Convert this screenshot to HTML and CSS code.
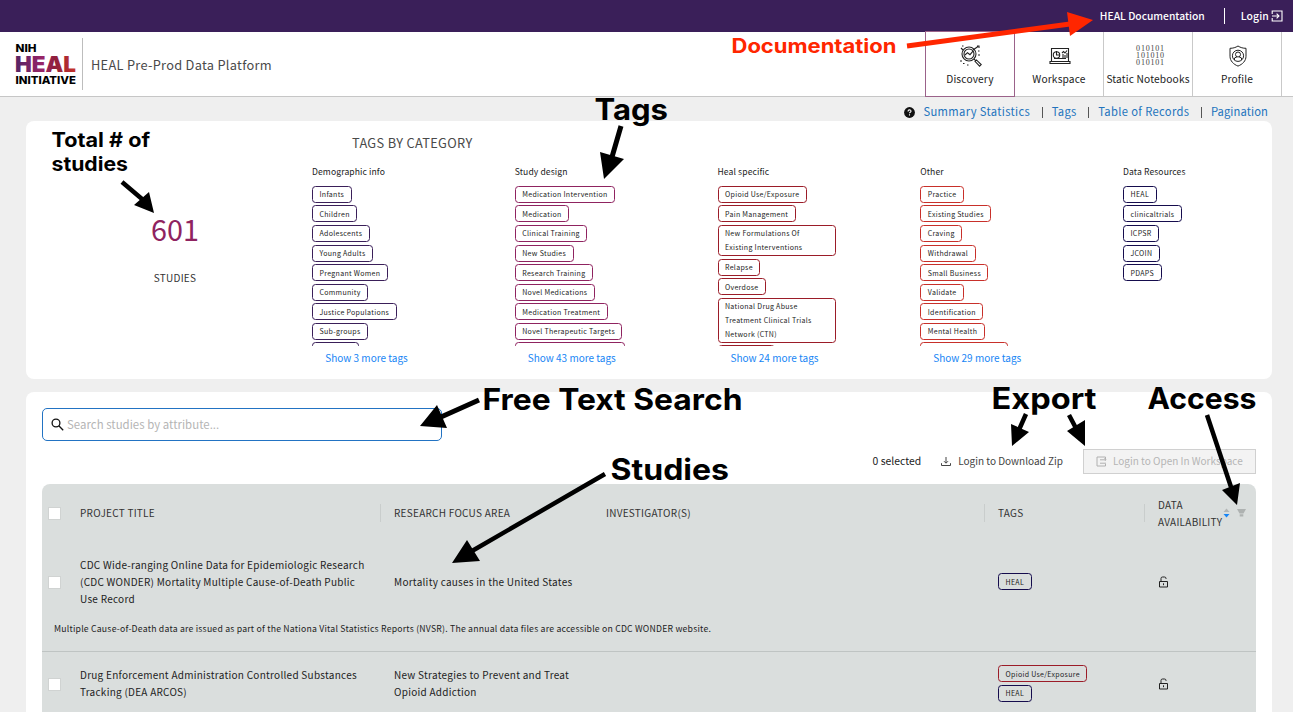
FILE: index.html
```html
<!DOCTYPE html>
<html lang="en">
<head>
<meta charset="utf-8">
<title>HEAL Pre-Prod Data Platform</title>
<link rel="stylesheet" href="styles.css">
</head>
<body>
<div class="page">
  <div class="topbar">
    <a class="topbar-doc">HEAL Documentation</a>
    <span class="topbar-sep"></span>
    <a class="topbar-login">Login
      <svg width="12" height="12" viewBox="0 0 12 12" fill="none" stroke="#fff" stroke-width="1.1"><path d="M1.2 4V1h9.8v10H1.2V8M1 6h6.8M5.6 3.6 8 6 5.6 8.4"/></svg>
    </a>
  </div>
  <header class="nav">
    <svg class="logo" width="62" height="42" viewBox="0 0 62 42">
      <defs><linearGradient id="heal" x1="0" x2="1"><stop offset="0" stop-color="#532565"/><stop offset=".45" stop-color="#982568"/><stop offset=".65" stop-color="#8f1f3c"/><stop offset="1" stop-color="#c7342b"/></linearGradient></defs>
      <text x="0.500" y="8.600" font-size="10.600" textLength="21" lengthAdjust="spacingAndGlyphs">NIH</text>
      <text class="logo-heal" x="0" y="28.500" font-size="21.500" textLength="61" lengthAdjust="spacingAndGlyphs" fill="url(#heal)">HEAL</text>
      <text x="0.500" y="40.700" font-size="10.600" textLength="60.500" lengthAdjust="spacingAndGlyphs">INITIATIVE</text>
    </svg>
    <div class="nav-title">HEAL Pre-Prod Data Platform</div>
    <nav class="nav-items">
      <a class="nav-item active">
        <svg width="24" height="24" viewBox="0 0 24 24" fill="none" stroke="#222" stroke-width="1.1"><circle cx="10" cy="10" r="7"/><circle cx="10" cy="10" r="5"/><path d="M15 15l1.6 1.6M16 17.3l1.4-1.4 4.8 4.7-1.6 1.6zM6 11l2.5-2.3 2.5 2 3-3.5M14 6l5-3.5M18 2h2v2M2 4l2 2M1 17h2M4 19.5h1.5M8 21h1.5M19 7h1.5M19 11h2M3 2h1.5"/></svg>
        <span>Discovery</span></a>
      <a class="nav-item">
        <svg width="24" height="24" viewBox="0 0 24 24" fill="none" stroke="#222" stroke-width="1.1"><path d="M3.500 17V4.500h17V17M2 17.500h20v2H2z"/><circle cx="8.500" cy="11" r="3.200"/><path d="M8.500 7v4h3.500M14 9l1.500-1.500L17 9l2-2.500M15 10v4M17 11v3M19 9v5M6 14.500h12"/></svg>
        <span>Workspace</span></a>
      <a class="nav-item">
        <span class="digits">010101<br>101010<br>010101</span>
        <span>Static Notebooks</span></a>
      <a class="nav-item">
        <svg width="24" height="24" viewBox="0 0 24 24" fill="none" stroke="#222" stroke-width="1"><path d="M12 2c2.500 1.600 5 2.300 8 2.300v8c0 4.600-3.500 8-8 9.800-4.500-1.800-8-5.200-8-9.800v-8c3 0 5.500-.7 8-2.300z"/><circle cx="12" cy="11.800" r="5.600"/><circle cx="12" cy="10.500" r="2.500"/><path d="M8.500 16v-2l2.500-1.200M15.500 16v-2L13 12.800"/></svg>
        <span>Profile</span></a>
    </nav>
  </header>

  <main class="main">
    <div class="tour">
      <svg width="11" height="11" viewBox="0 0 11 11"><circle cx="5.500" cy="5.500" r="5.400" fill="#111"/><path d="M4 4.400c0-2 3-2 3-.2 0 1.100-1.500 1-1.500 2.100M5.500 7.300v1.200" fill="none" stroke="#fff" stroke-width="1.100"/></svg>
      <a>Summary Statistics</a><i></i><a>Tags</a><i></i><a>Table of Records</a><i></i><a>Pagination</a>
    </div>

    <section class="panel summary">
      <div class="stat"><div class="stat-num">601</div><div class="stat-label">STUDIES</div></div>
      <div class="cats">
        <h2>TAGS BY CATEGORY</h2>
        <div class="cat-grid">
          <div class="cat demo"><h3>Demographic info</h3>
            <div class="tags"><b>Infants</b><b>Children</b><b>Adolescents</b><b>Young Adults</b><b>Pregnant Women</b><b>Community</b><b>Justice Populations</b><b>Sub-groups</b><b class="cut"></b></div>
            <a class="more">Show 3 more tags</a></div>
          <div class="cat design"><h3>Study design</h3>
            <div class="tags"><b>Medication Intervention</b><b>Medication</b><b>Clinical Training</b><b>New Studies</b><b>Research Training</b><b>Novel Medications</b><b>Medication Treatment</b><b>Novel Therapeutic Targets</b><b class="cut"></b></div>
            <a class="more">Show 43 more tags</a></div>
          <div class="cat specific"><h3>Heal specific</h3>
            <div class="tags"><b>Opioid Use/Exposure</b><b>Pain Management</b><b>New Formulations Of Existing Interventions</b><b>Relapse</b><b>Overdose</b><b>National Drug Abuse Treatment Clinical Trials Network (CTN)</b><b class="cut"></b></div>
            <a class="more">Show 24 more tags</a></div>
          <div class="cat other"><h3>Other</h3>
            <div class="tags"><b>Practice</b><b>Existing Studies</b><b>Craving</b><b>Withdrawal</b><b>Small Business</b><b>Validate</b><b>Identification</b><b>Mental Health</b><b class="cut"></b></div>
            <a class="more">Show 29 more tags</a></div>
          <div class="cat res"><h3>Data Resources</h3>
            <div class="tags"><b>HEAL</b><b>clinicaltrials</b><b>ICPSR</b><b>JCOIN</b><b>PDAPS</b></div></div>
        </div>
      </div>
    </section>

    <section class="panel records">
      <div class="search">
        <svg width="13" height="13" viewBox="0 0 13 13" fill="none" stroke="#111" stroke-width="1.300"><circle cx="5" cy="5" r="3.900"/><path d="M7.800 7.800l4.400 4.400"/></svg>
        <span>Search studies by attribute...</span>
      </div>
      <div class="actions">
        <span class="selected">0 selected</span>
        <a class="download"><svg width="10" height="10" viewBox="0 0 10 10" fill="none" stroke="#444" stroke-width="1"><path d="M5 0v6M3 4.200l2 2 2-2M.5 6.200v2.300h9V6.200"/></svg><span>Login to Download Zip</span></a>
        <a class="open"><svg width="11" height="11" viewBox="0 0 11 11" fill="none" stroke="#b0b0b0" stroke-width="1"><path d="M9.500 3V1h-8.500v9h8.500V8M4 3.800h6M4 7.200h6M8.500 2.300l1.500 1.500-1 1"/></svg><span>Login to Open In Workspace</span></a>
      </div>
      <div class="table">
        <div class="row head">
          <div><span class="check"></span></div>
          <div class="text">PROJECT TITLE</div>
          <div class="text line">RESEARCH FOCUS AREA</div>
          <div class="text">INVESTIGATOR(S)</div>
          <div class="text line">TAGS</div>
          <div class="line avail"><span>DATA<br>AVAILABILITY</span>
            <svg width="7" height="10" viewBox="0 0 7 10"><path d="M3.500 .5 6.500 4H.5z" fill="#b2b6b5"/><path d="M3.500 9.500 6.500 6H.5z" fill="#1785f5"/></svg>
            <svg class="funnel" width="9" height="8" viewBox="0 0 9 8"><path d="M0 0h9L6.500 4.500h-4zM2.700 5.300h3.600V7.500H2.700z" fill="#aeb2b1"/></svg></div>
        </div>
        <div class="row r1">
          <div><span class="check"></span></div>
          <div class="text">CDC Wide-ranging Online Data for Epidemiologic Research<br>(CDC WONDER) Mortality Multiple Cause-of-Death Public<br>Use Record</div>
          <div class="text">Mortality causes in the United States</div>
          <div></div>
          <div class="tags res"><b>HEAL</b></div>
          <div class="lock"><svg width="11" height="12" viewBox="0 0 11 12" fill="none" stroke="#222" stroke-width="1"><path d="M1.500 5.500h8v5.500h-8zM3 5.500V2.500q0-1.500 1.500-1.500h2Q8 1 8 2.500V3M5.500 7.300v1.900"/></svg></div>
        </div>
        <div class="desc">Multiple Cause-of-Death data are issued as part of the Nationa Vital Statistics Reports (NVSR). The annual data files are accessible on CDC WONDER website.</div>
        <div class="row r2">
          <div><span class="check"></span></div>
          <div class="text">Drug Enforcement Administration Controlled Substances<br>Tracking (DEA ARCOS)</div>
          <div class="text">New Strategies to Prevent and Treat<br>Opioid Addiction</div>
          <div></div>
          <div class="tags res"><b class="opioid">Opioid Use/Exposure</b><b>HEAL</b></div>
          <div class="lock"><svg width="11" height="12" viewBox="0 0 11 12" fill="none" stroke="#222" stroke-width="1"><path d="M1.500 5.500h8v5.500h-8zM3 5.500V2.500q0-1.500 1.500-1.500h2Q8 1 8 2.500V3M5.500 7.300v1.900"/></svg></div>
        </div>
      </div>
    </section>
  </main>

  <svg class="notes" width="1293" height="712" viewBox="0 0 1293 712">
    <g fill="#ff2600" stroke="none"><path d="M907 46 1070 24" stroke="#ff2600" stroke-width="5"/><path d="M1093 20 1067 12l3 24z"/>
      <text x="731.500" y="53" font-size="19.500" textLength="165" lengthAdjust="spacingAndGlyphs">Documentation</text></g>
    <g stroke="#000" stroke-width="4.500"><path d="M122 182l20 17M605 474 472 551M1026 414l-8 18M1069 415l9 17M1207 415l25 75"/><path stroke-width="5" d="M621 126l-9 31M479 400l-38 17"/></g>
    <path d="M154 213l-5-21-15 13zM604 179l-4-27 24 7zM420 426l17-21 10 23zM452 563l15-23 13 21zM1012 446l-1-22 18 8zM1085 446l-18-15 18-11zM1237 505l-15-15 18-7z"/>
    <text x="51.500" y="147" font-size="20" textLength="98.500" lengthAdjust="spacingAndGlyphs">Total # of</text>
    <text x="51.500" y="171" font-size="20" textLength="76.500" lengthAdjust="spacingAndGlyphs">studies</text>
    <text x="594.500" y="120" font-size="29.500" textLength="73.500" lengthAdjust="spacingAndGlyphs">Tags</text>
    <text x="482.500" y="410" font-size="29.500" textLength="260" lengthAdjust="spacingAndGlyphs">Free Text Search</text>
    <text x="610.500" y="480" font-size="29.500" textLength="118.500" lengthAdjust="spacingAndGlyphs">Studies</text>
    <text x="991.500" y="409" font-size="29.500" textLength="105" lengthAdjust="spacingAndGlyphs">Export</text>
    <text x="1147.500" y="409" font-size="29.500" textLength="109" lengthAdjust="spacingAndGlyphs">Access</text>
  </svg>
</div>
</body>
</html>
```
FILE: styles.css
```css
* { box-sizing: border-box; }
body { margin: 0; font-family: "Noto Sans CJK SC", "Noto Sans", sans-serif; color: #222; background: #efefef; }
.page { position: relative; width: 1293px; height: 712px; overflow: hidden; }
svg { flex: none; display: block; }

.topbar { height: 32px; background: #3a1f59; color: #fff; display: flex; align-items: center; justify-content: flex-end; padding-right: 10px; font-size: 10.4px; line-height: 16px; }
.topbar-doc { font-weight: 500; font-size: 10.3px; letter-spacing: 0; }
.topbar-sep { width: 1px; height: 16px; background: #fff; margin: 0 16px 0 19px; }
.topbar-login { display: flex; align-items: center; gap: 2px; letter-spacing: .15px; font-weight: 500; }

.nav { height: 65px; background: #fff; border-bottom: 1px solid #c6c6c6; display: flex; align-items: center; padding-left: 15px; }
.logo { margin-right: 5px; font-family: Inter, sans-serif; font-weight: 800; }
.logo-heal { font-weight: 900; }
.nav-title { height: 52px; line-height: 54px; border-left: 1px solid #bdbdbd; padding-left: 8px; font-size: 12.8px; letter-spacing: .29px; color: #4a4a4a; }
.nav-items { margin-left: auto; display: flex; padding-right: 11px; align-self: flex-start; }
.nav-item { width: 89px; height: 64px; border-right: 1px solid #c9c9c9; display: flex; flex-direction: column; align-items: center; padding-top: 12px; font-size: 10.2px; letter-spacing: .15px; line-height: 16px; gap: 3px; white-space: nowrap; }
.nav-item svg { margin-left: 2px; }
.nav-item.active { width: 90px; height: 66px; margin-top: -1px; border: 1px solid #9b628a; }
.digits { height: 24px; font: 8px/7px "Liberation Serif", serif; letter-spacing: .8px; color: #444; padding: 1px 0 0 5px; }

.main { padding: 0 21px 0 26px; }
.tour { height: 24px; display: flex; align-items: center; justify-content: flex-end; padding: 5px 4px 0 0; font-size: 11.2px; line-height: 16px; letter-spacing: .35px; color: #2273bd; }
.tour a { margin-bottom: 1px; }
.tour svg { margin: 1px 8px 0 0; }
.tour i { width: 1px; height: 11px; background: #555; margin: 1px 9px 0 11.500px; }
.tour a:last-child { letter-spacing: .1px; }
.panel { background: #fff; border-radius: 8px; }

.summary { height: 258px; display: flex; }
.stat { width: 286px; padding: 86px 0 0 12px; text-align: center; }
.stat-num { font-size: 28.800px; line-height: 44px; color: #8f2360; }
.stat-label { margin-top: 18px; font-size: 10px; line-height: 18px; letter-spacing: .25px; color: #333; }
.cats { flex: 1; }
.cats h2 { margin: 12px 0 0 40px; font-size: 12.8px; line-height: 20px; font-weight: 400; letter-spacing: .32px; color: #4a4a4a; }
.cat-grid { display: grid; grid-template-columns: repeat(5, 202.750px); margin-right: -60px; }
.cat { padding-top: 10px; }
.cat h3 { margin: 0; font-size: 8.600px; line-height: 16px; font-weight: 400; letter-spacing: .1px; color: #222; }
.tags { display: flex; flex-direction: column; align-items: flex-start; gap: 2.550px; }
.cat .tags { height: 160.100px; margin-top: 6.900px; overflow: hidden; }
.tags b { flex: none; max-width: 118px; border: 1px solid #3a1f59; border-radius: 3.500px; padding: .5px 6.500px; font-size: 7px; line-height: 14px; font-weight: 400; letter-spacing: .31px; color: #222; }
.tags b.cut { width: 47px; height: 17px; }
.design b.cut { width: 110px; }
.specific b.cut { width: 57px; }
.other b.cut { width: 88px; }
.design b { border-color: #8f2360; }
.specific b, .tags b.opioid { border-color: #9b1c28; }
.other b { border-color: #c8302a; }
.res b { border-color: #150c4d; }
.more { display: block; width: 114px; text-align: center; font-size: 10px; line-height: 16px; margin-top: 4px; color: #1785f5; }
.demo .more { width: 109px; }

.records { margin-top: 13px; height: 330px; padding: 16px 16px 0; }
.search { width: 400px; height: 33px; border: 1px solid #2273c3; border-radius: 5px; display: flex; align-items: center; gap: 3px; padding-left: 8px; font-size: 11.400px; line-height: 18px; letter-spacing: .04px; color: #b5b5b5; }
.search span { margin-bottom: 2px; }
.actions { height: 25px; margin: 8px 0 10px; display: flex; align-items: center; justify-content: flex-end; font-size: 10px; line-height: 16px; color: #444; }
.actions span { padding-bottom: 2px; }
.selected { margin-right: 20px; font-size: 10.400px; color: #222; }
.download { display: flex; align-items: center; gap: 7px; margin-right: 20px; }
.open { display: flex; align-items: center; gap: 6px; width: 173px; height: 25px; border: 1px solid #d0d0d0; background: #f3f3f3; color: #b5b5b5; padding-left: 12px; white-space: nowrap; }

.table { background: #dadedd; border-radius: 8px 8px 0 0; height: 240px; font-size: 10px; line-height: 17px; letter-spacing: .26px; }
.row { display: grid; grid-template-columns: 25px 313px 212px 392px 160px 112px; align-items: center; white-space: nowrap; }
.row > div { padding-left: 14px; }
.row > div:nth-child(2) { padding-left: 13px; }
.row > div:first-child { padding-left: 6px; }
.row > .text { padding-bottom: 2px; }
.head { height: 58px; color: #333; }
.head .line { position: relative; }
.head .line::before { content: ""; position: absolute; left: 0; top: 50%; width: 1px; height: 18px; margin-top: -9px; background: #c9cdcc; }
.check { display: block; width: 13px; height: 13px; background: #fff; border: 1px solid #d0d3d2; }
.avail { display: flex; align-items: center; gap: 1px; }
.funnel { margin-left: 6px; }
.r1 { height: 80px; }
.r1 .tags { padding-bottom: 1px; }
.desc { height: 30px; padding-left: 12px; border-bottom: 1px solid #bfc4c3; font-size: 8.700px; line-height: 14px; letter-spacing: .215px; white-space: nowrap; }
.r2 { height: 64px; }
.r2 .tags { padding-bottom: 1px; }

.notes { position: absolute; left: 0; top: 0; font-family: Inter, sans-serif; font-weight: 700; pointer-events: none; }
```
